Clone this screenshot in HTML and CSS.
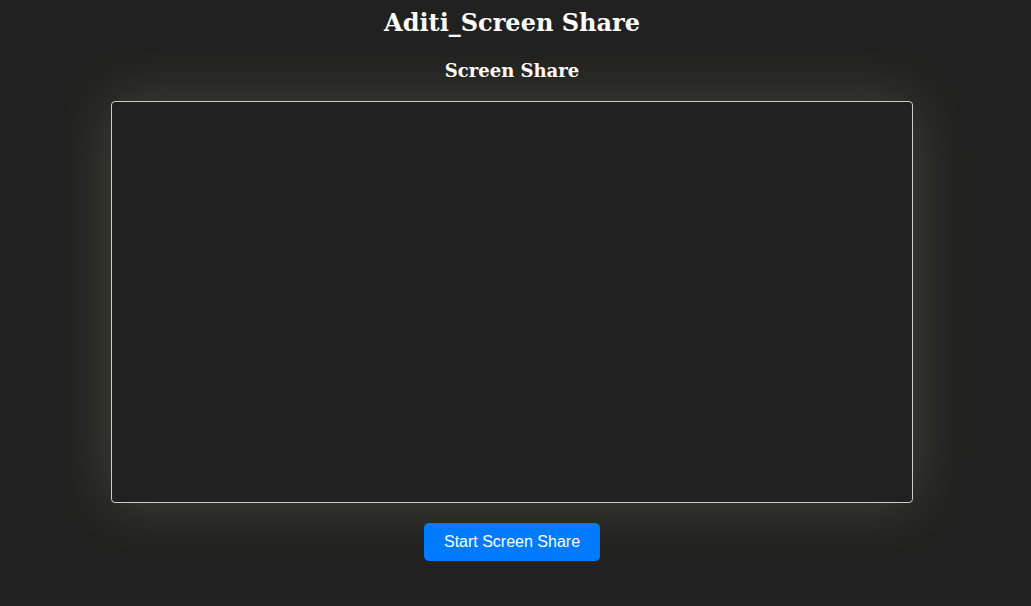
FILE: index.html
```html
<!DOCTYPE html>
<html lang="en">
<head>
<meta charset="utf-8">
<title>Aditi_Screen Share</title>
<link rel="stylesheet" href="styles.css">
</head>
<body>
  <h1 class="title">Aditi_Screen Share</h1>
  <main class="share">
    <h2 class="share-heading">Screen Share</h2>
    <div class="screen"></div>
    <button class="start-btn" type="button">Start Screen Share</button>
  </main>
</body>
</html>
```

FILE: styles.css
```css
html, body {
  margin: 0;
  padding: 0;
  background: #212121;
  height: 100%;
}
body {
  box-sizing: border-box;
  padding-right: 7px;
  color: #ffffff;
  font-family: "DejaVu Serif", "Liberation Serif", serif;
  display: flex;
  flex-direction: column;
  align-items: center;
  overflow: hidden;
}
.title {
  margin: 7px 0 0;
  font-size: 24px;
  line-height: 32px;
  font-weight: bold;
}
.share {
  display: flex;
  flex-direction: column;
  align-items: center;
}
.share-heading {
  margin: 20px 0 18px;
  font-size: 18px;
  line-height: 24px;
  font-weight: bold;
}
.screen {
  width: 800px;
  height: 400px;
  background: #212121;
  border: 1px solid #cccccc;
  border-radius: 4px;
  box-shadow: 0 0 60px rgba(255, 255, 195, 0.16);
}
.start-btn {
  margin-top: 20px;
  padding: 10px 20px;
  font-family: "Liberation Sans", Arial, sans-serif;
  font-size: 16px;
  line-height: 18px;
  color: #ffffff;
  background: #007bff;
  border: none;
  border-radius: 5px;
}
```
